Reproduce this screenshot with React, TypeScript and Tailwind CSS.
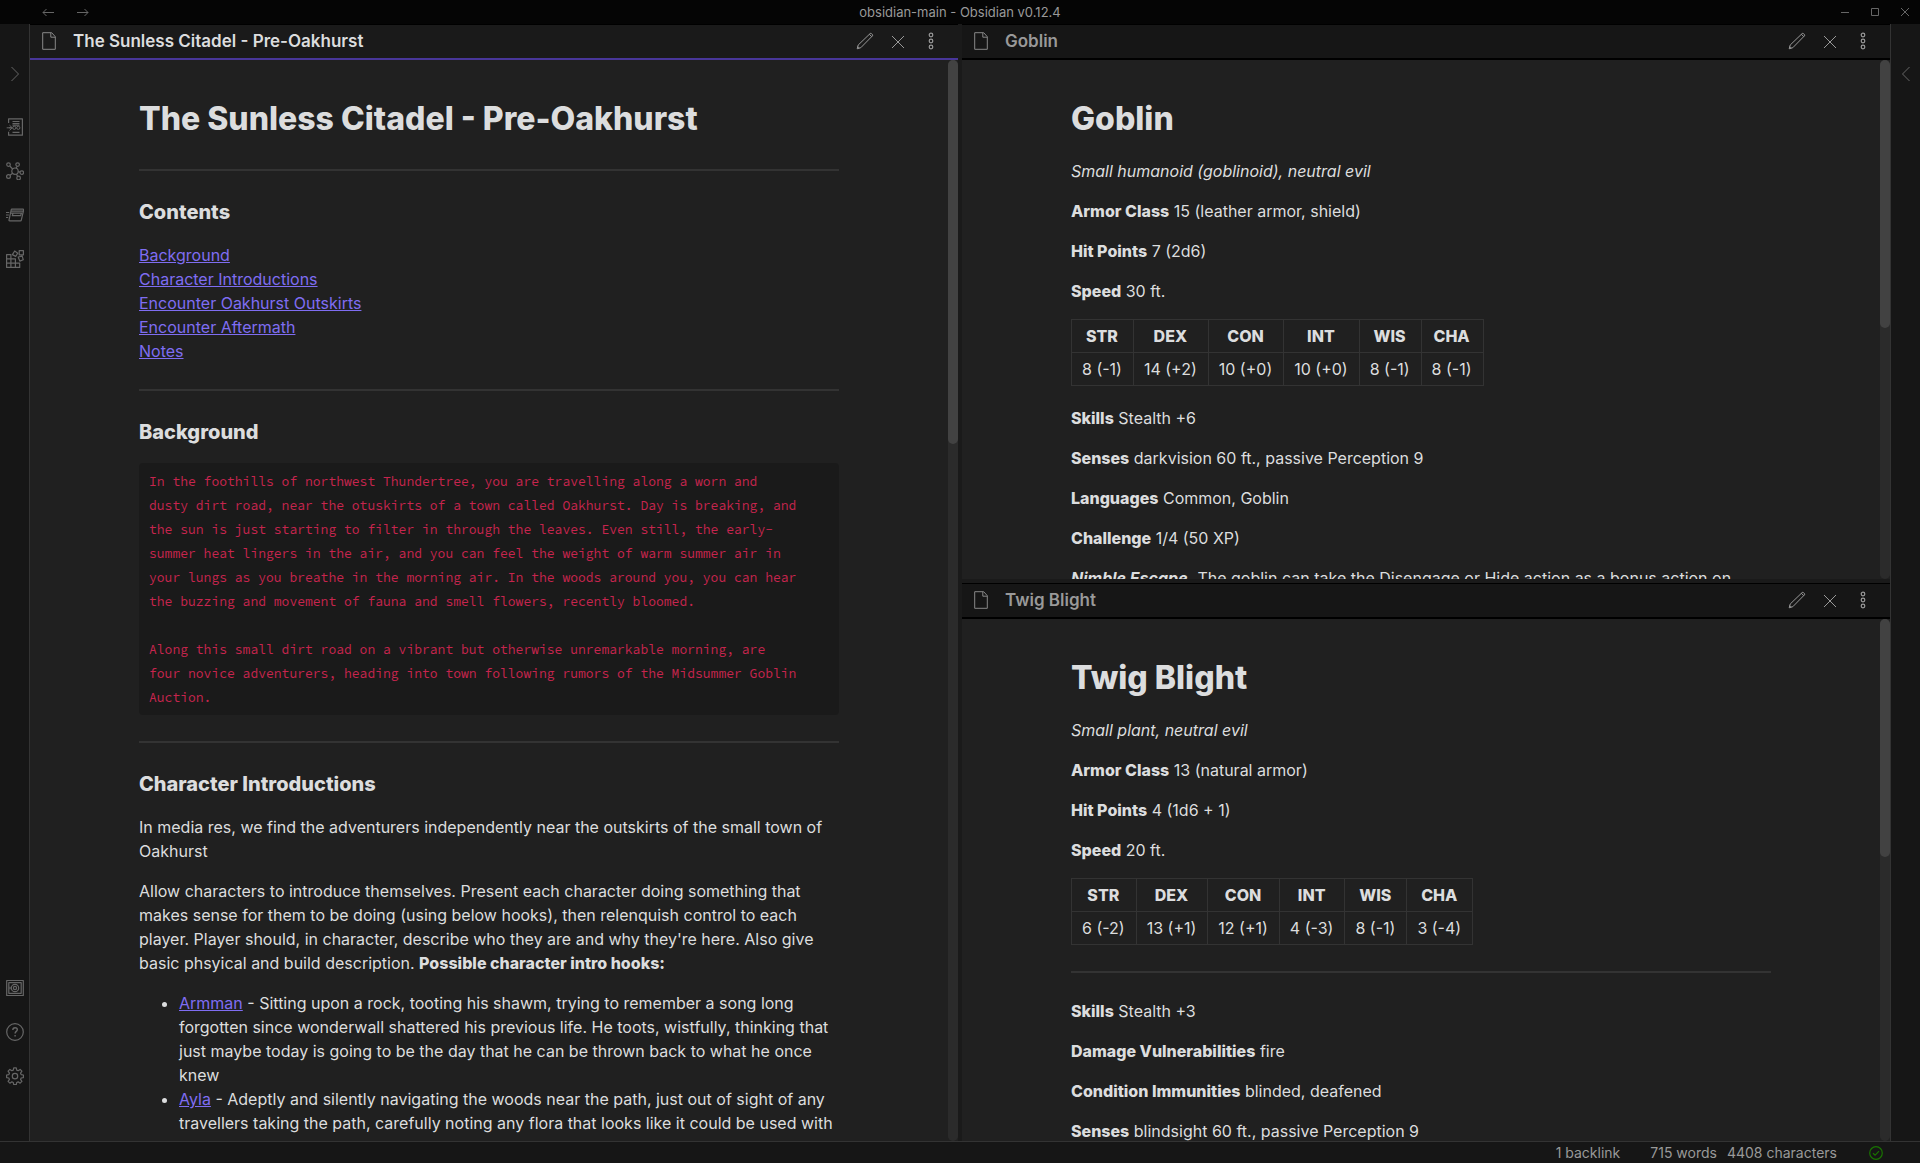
import type { ReactNode } from "react";

type IconProps = { children: ReactNode; size?: string; box?: string; sw?: number };

function Icon({ children, size = "size-[18px]", box = "0 0 18 18", sw = 1 }: IconProps) {
  return (
    <svg
      className={size}
      viewBox={box}
      fill="none"
      stroke="currentColor"
      strokeWidth={sw}
      strokeLinejoin="round"
      aria-hidden="true"
    >
      {children}
    </svg>
  );
}

const DocumentIcon = () => (
  <Icon size="h-[18px] w-[14px] shrink-0" box="0 0 14 18">
    <path d="M.7.7h9l3.6 4v12.6H.7zM8.8.9v4.3h4.4" />
  </Icon>
);

const PencilIcon = () => (
  <Icon>
    <path d="M1.2 16.8l1-3.8L14 1.7a1.1 1.1 0 0 1 1.6 0l.7.7a1.1 1.1 0 0 1 0 1.6L4.8 15.7z" />
    <path d="M13.4 2.3l2.3 2.3M1.9 14.6l1.4 1.5" />
  </Icon>
);

const CrossIcon = () => (
  <Icon>
    <path d="M3 4l12 12M15 4L3 16" />
  </Icon>
);

const DotsIcon = () => (
  <Icon sw={1.2}>
    <circle cx="9" cy="3" r="1.8" />
    <circle cx="9" cy="9" r="1.8" />
    <circle cx="9" cy="15" r="1.8" />
  </Icon>
);

const SwitcherIcon = () => (
  <Icon>
    <path d="M2.6 5V.8h13.8v16.4H2.6v-3.4" strokeWidth="1.2" />
    <path d="M6.5 3.5h7M6.5 5.5h7M6.5 7.2h7M6.5 14.3h7" strokeWidth="1.2" />
    <path d="M.7 9.8h5M3.5 7.2L6.3 9.8l-2.8 2.6M3 9.8h3" />
    <circle cx="8.3" cy="9.8" r="1.6" />
    <circle cx="12.3" cy="9.8" r="1.6" />
  </Icon>
);

const GraphIcon = () => (
  <Icon sw={1.2}>
    <circle cx="9" cy="9.2" r="3.2" />
    <circle cx="2.5" cy="2.6" r="1.8" />
    <circle cx="11.6" cy="2.6" r="1.8" />
    <circle cx="2.5" cy="14.5" r="1.9" />
    <circle cx="15.8" cy="10.6" r="1.8" />
    <circle cx="12.6" cy="16" r="1.8" />
    <path d="M3.8 4l2.8 3M10.9 4.4l-.8 1.8M4 13.2l2.6-2M12.2 9.7l1.9.4M10.4 12.1l1.3 2.4" />
  </Icon>
);

const CardsIcon = () => (
  <Icon sw={1.2}>
    <path d="M5.8 3.2h11.4c.4 0 .6.3.5.7l-2.4 10.2c-.1.5-.4.7-.9.7H3.6c-.5 0-.7-.3-.6-.7L5.2 3.9c.1-.4.3-.7.6-.7z" />
    <path d="M5 5.2h12M4.7 7.2h11.6M7 7.4l-.7 2.3h8.4l.6-2.3M0 6.5h3.3M0 9h2.8M0 11.5h2.2" />
  </Icon>
);

const BlocksIcon = () => (
  <Icon sw={1.2}>
    <path d="M.6 4.6h4.3v12.8H.6zM.6 8.9h8.8v8.5M.6 13.2h13.1v4.2H.6M4.9 17.4V8.9" />
    <path d="M13.2.6h4.2v4.2h-4.2zM8.7 1l3 2.2-2 3.2-3.3-1.8zM12.2 7l4-.9 1.1 3.7-3.5 1.3z" />
  </Icon>
);

const VaultIcon = () => (
  <Icon sw={1.2}>
    <path d="M.7 1.5h16.6v15H.7zM2.8 3.7h12.4v10.6H2.8z" />
    <circle cx="9" cy="9" r="3.7" />
    <circle cx="9" cy="9" r="1.6" />
    <path d="M4 7.7v2.6" />
  </Icon>
);

const HelpIcon = () => (
  <Icon sw={1.2}>
    <circle cx="9" cy="9" r="8.3" />
    <path d="M6.8 6.9c0-1.3 1-2.2 2.3-2.2s2.2.9 2.2 2c0 1.6-2.2 1.8-2.2 3.8M9.1 12v1.6" strokeWidth="1.4" />
  </Icon>
);

const GearIcon = () => (
  <Icon size="size-[18px]" box="0 0 24 24" sw={1.6}>
    <path d="M10.3 1.2h3.4l.6 3 1.9.8 2.6-1.8 2.4 2.4-1.8 2.6.8 1.9 3 .6v3.4l-3 .6-.8 1.9 1.8 2.6-2.4 2.4-2.6-1.8-1.9.8-.6 3h-3.4l-.6-3-1.9-.8-2.6 1.8-2.4-2.4 1.8-2.6-.8-1.9-3-.6v-3.4l3-.6.8-1.9-1.8-2.6 2.4-2.4 2.6 1.8 1.9-.8z" />
    <circle cx="12" cy="12.2" r="3.6" />
  </Icon>
);

function RibbonButton({ label, children }: { label: string; children: ReactNode }) {
  return (
    <button type="button" aria-label={label} className="flex h-11 w-full items-center justify-center text-[#666]">
      {children}
    </button>
  );
}

function HeaderButton({ label, children }: { label: string; children: ReactNode }) {
  return (
    <button type="button" aria-label={label} className="flex h-full w-[33px] items-center justify-center text-[#999]">
      {children}
    </button>
  );
}

type PaneProps = { title: string; active?: boolean; size: string; thumb: string; children: ReactNode };

function Pane({ title, active = false, size, thumb, children }: PaneProps) {
  return (
    <section className={`flex min-h-0 min-w-0 flex-col border-t border-black ${size}`}>
      <header
        className={`flex h-[35px] shrink-0 items-center border-b-2 pr-[11px] pb-[2px] pl-3 ${
          active ? "border-[#483699] bg-[#1a1a1a] text-[#dcddde]" : "border-black bg-[#161616] text-[#999]"
        }`}
      >
        <span className="text-[#888]">
          <DocumentIcon />
        </span>
        <div className="ml-[17px] flex-1 truncate text-[17px] leading-6 font-semibold">{title}</div>
        <HeaderButton label="Edit">
          <PencilIcon />
        </HeaderButton>
        <HeaderButton label="Close">
          <CrossIcon />
        </HeaderButton>
        <HeaderButton label="More options">
          <DotsIcon />
        </HeaderButton>
      </header>
      <div className="flex min-h-0 flex-1 bg-[#202020]">
        <article className="min-w-0 flex-1 overflow-hidden px-[30px] pt-[35px]">
          <div className="mx-auto max-w-[700px]">{children}</div>
        </article>
        <div className="w-[10px] shrink-0 rounded-full bg-[#2b2b2b]">
          <div className={`rounded-full bg-[#424242] ${thumb}`} />
        </div>
      </div>
    </section>
  );
}

const H1 = ({ children }: { children: ReactNode }) => (
  <h1 className="text-[32px] leading-[48px] font-extrabold">{children}</h1>
);
const H3 = ({ children }: { children: ReactNode }) => (
  <h3 className="mb-4 text-xl leading-[30px] font-extrabold">{children}</h3>
);
const Rule = () => <hr className="my-[26px] border-t-2 border-[#333]" />;

function Stat({ name, children }: { name: string; children: ReactNode }) {
  return (
    <p className="my-4">
      <strong className="font-extrabold">{name}</strong> {children}
    </p>
  );
}

const ABILITIES = ["STR", "DEX", "CON", "INT", "WIS", "CHA"];

function AbilityTable({ scores }: { scores: string[] }) {
  return (
    <table className="border-collapse text-center">
      <thead>
        <tr>
          {ABILITIES.map((a) => (
            <th key={a} scope="col" className="border border-[#333] py-1 pr-[11px] pl-[10px] font-extrabold">
              {a}
            </th>
          ))}
        </tr>
      </thead>
      <tbody>
        <tr>
          {scores.map((s, i) => (
            <td key={ABILITIES[i]} className="border border-[#333] py-1 pr-[11px] pl-[10px]">
              {s}
            </td>
          ))}
        </tr>
      </tbody>
    </table>
  );
}

const Link = ({ children }: { children: ReactNode }) => (
  <a href="#" className="text-[#7f6df2] underline">
    {children}
  </a>
);

const SECTIONS = [
  "Background",
  "Character Introductions",
  "Encounter Oakhurst Outskirts",
  "Encounter Aftermath",
  "Notes",
];

const READ_ALOUD = `In the foothills of northwest Thundertree, you are travelling along a worn and
dusty dirt road, near the otuskirts of a town called Oakhurst. Day is breaking, and
the sun is just starting to filter in through the leaves. Even still, the early-
summer heat lingers in the air, and you can feel the weight of warm summer air in
your lungs as you breathe in the morning air. In the woods around you, you can hear
the buzzing and movement of fauna and smell flowers, recently bloomed.

Along this small dirt road on a vibrant but otherwise unremarkable morning, are
four novice adventurers, heading into town following rumors of the Midsummer Goblin
Auction.`;

function TitleBar() {
  return (
    <div className="grid h-6 shrink-0 grid-cols-[1fr_auto_1fr] items-center bg-[#050505] text-[#666]">
      <div className="flex pl-[30px]">
        <button type="button" aria-label="Back" className="flex h-6 w-[35px] items-center justify-center">
          <Icon size="h-[9px] w-3" box="0 0 12 9">
            <path d="M1 4.5h11M4.5 1L1 4.5 4.5 8" />
          </Icon>
        </button>
        <button type="button" aria-label="Forward" className="flex h-6 w-[35px] items-center justify-center">
          <Icon size="h-[9px] w-3" box="0 0 12 9">
            <path d="M0 4.5h11M7.5 1L11 4.5 7.5 8" />
          </Icon>
        </button>
      </div>
      <div className="text-[13px] leading-6 text-[#999]">obsidian-main - Obsidian v0.12.4</div>
      <div className="flex justify-end">
        <button type="button" aria-label="Minimize" className="flex h-6 w-[30px] items-center justify-center">
          <Icon size="size-2" box="0 0 8 8">
            <path d="M0 4.5h8" />
          </Icon>
        </button>
        <button type="button" aria-label="Maximize" className="flex h-6 w-[30px] items-center justify-center">
          <Icon size="size-2" box="0 0 8 8">
            <path d="M.5.5h7v7h-7z" />
          </Icon>
        </button>
        <button type="button" aria-label="Close window" className="flex h-6 w-[30px] items-center justify-center">
          <Icon size="size-2" box="0 0 8 8">
            <path d="M0 0l8 8M8 0L0 8" />
          </Icon>
        </button>
      </div>
    </div>
  );
}

export default function App() {
  return (
    <div className="flex h-screen flex-col overflow-hidden bg-[#161616] font-['Inter',sans-serif] text-base leading-6 text-[#dcddde]">
      <TitleBar />
      <div className="flex min-h-0 flex-1">
        <nav aria-label="Left ribbon" className="flex w-[30px] shrink-0 flex-col border-r border-[#333] pt-7 pb-[43px]">
          <div className="mb-[9px]">
            <RibbonButton label="Expand left sidebar">
              <Icon>
                <path d="M5.5 2l7 7-7 7" />
              </Icon>
            </RibbonButton>
          </div>
          <RibbonButton label="Open quick switcher">
            <SwitcherIcon />
          </RibbonButton>
          <RibbonButton label="Open graph view">
            <GraphIcon />
          </RibbonButton>
          <RibbonButton label="Open cards">
            <CardsIcon />
          </RibbonButton>
          <RibbonButton label="Open blocks">
            <BlocksIcon />
          </RibbonButton>
          <div className="mt-auto">
            <RibbonButton label="Open another vault">
              <VaultIcon />
            </RibbonButton>
            <RibbonButton label="Help">
              <HelpIcon />
            </RibbonButton>
            <RibbonButton label="Settings">
              <GearIcon />
            </RibbonButton>
          </div>
        </nav>

        <main className="flex min-w-0 flex-1 gap-1 bg-[#1a1a1a]">
          <Pane title="The Sunless Citadel - Pre-Oakhurst" active size="flex-1" thumb="h-[384px]">
            <H1>The Sunless Citadel - Pre-Oakhurst</H1>
            <Rule />
            <H3>Contents</H3>
            <ul>
              {SECTIONS.map((s) => (
                <li key={s}>
                  <Link>{s}</Link>
                </li>
              ))}
            </ul>
            <Rule />
            <H3>Background</H3>
            <pre className="rounded bg-[#1a1a1a] px-[10px] pt-[7px] pb-[5px] font-['Source_Code_Pro','Liberation_Mono',monospace] text-[13px] leading-6 text-[#c7254e]">
              {READ_ALOUD}
            </pre>
            <Rule />
            <H3>Character Introductions</H3>
            <p className="my-4">
              In media res, we find the adventurers independently near the outskirts of the small town of Oakhurst
            </p>
            <p className="my-4">
              Allow characters to introduce themselves. Present each character doing something that makes sense for
              them to be doing (using below hooks), then relenquish control to each player. Player should, in
              character, describe who they are and why they're here. Also give basic phsyical and build description.{" "}
              <strong className="font-extrabold">Possible character intro hooks:</strong>
            </p>
            <ul className="list-disc pl-10">
              <li>
                <Link>Armman</Link> - Sitting upon a rock, tooting his shawm, trying to remember a song long forgotten
                since wonderwall shattered his previous life. He toots, wistfully, thinking that just maybe today is
                going to be the day that he can be thrown back to what he once knew
              </li>
              <li>
                <Link>Ayla</Link> - Adeptly and silently navigating the woods near the path, just out of sight of any
                travellers taking the path, carefully noting any flora that looks like it could be used with
              </li>
            </ul>
          </Pane>

          <div className="flex min-w-0 flex-1 flex-col gap-1">
            <Pane title="Goblin" size="flex-[555_1_0]" thumb="h-[268px]">
              <H1>Goblin</H1>
              <p className="my-4 italic">Small humanoid (goblinoid), neutral evil</p>
              <Stat name="Armor Class">15 (leather armor, shield)</Stat>
              <Stat name="Hit Points">7 (2d6)</Stat>
              <Stat name="Speed">30 ft.</Stat>
              <AbilityTable scores={["8 (-1)", "14 (+2)", "10 (+0)", "10 (+0)", "8 (-1)", "8 (-1)"]} />
              <div className="mt-5">
                <Stat name="Skills">Stealth +6</Stat>
                <Stat name="Senses">darkvision 60 ft., passive Perception 9</Stat>
                <Stat name="Languages">Common, Goblin</Stat>
                <Stat name="Challenge">1/4 (50 XP)</Stat>
                <p className="my-4">
                  <strong className="font-bold italic">Nimble Escape.</strong> The goblin can take the Disengage or
                  Hide action as a bonus action on each of its turns.
                </p>
              </div>
            </Pane>
            <Pane title="Twig Blight" size="flex-[558_1_0]" thumb="h-[238px]">
              <H1>Twig Blight</H1>
              <p className="my-4 italic">Small plant, neutral evil</p>
              <Stat name="Armor Class">13 (natural armor)</Stat>
              <Stat name="Hit Points">4 (1d6 + 1)</Stat>
              <Stat name="Speed">20 ft.</Stat>
              <AbilityTable scores={["6 (-2)", "13 (+1)", "12 (+1)", "4 (-3)", "8 (-1)", "3 (-4)"]} />
              <Rule />
              <Stat name="Skills">Stealth +3</Stat>
              <Stat name="Damage Vulnerabilities">fire</Stat>
              <Stat name="Condition Immunities">blinded, deafened</Stat>
              <Stat name="Senses">blindsight 60 ft., passive Perception 9</Stat>
            </Pane>
          </div>
        </main>

        <nav aria-label="Right ribbon" className="w-[30px] shrink-0 border-l border-[#333] pt-7">
          <RibbonButton label="Expand right sidebar">
            <Icon>
              <path d="M12.5 2l-7 7 7 7" />
            </Icon>
          </RibbonButton>
        </nav>
      </div>

      <footer className="flex h-[22px] shrink-0 items-center justify-end border-t border-[#333] pr-[37px] text-sm leading-5 text-[#999]">
        <span>1 backlink</span>
        <span className="ml-[30px]">715 words</span>
        <span className="ml-[10px]">4408 characters</span>
        <span className="ml-8 text-[#197300]">
          <Icon size="size-[14px]" box="0 0 14 14" sw={1.2}>
            <circle cx="7" cy="7" r="6.3" />
            <path d="M4 7.2l2.2 2 3.8-4" />
          </Icon>
        </span>
      </footer>
    </div>
  );
}
